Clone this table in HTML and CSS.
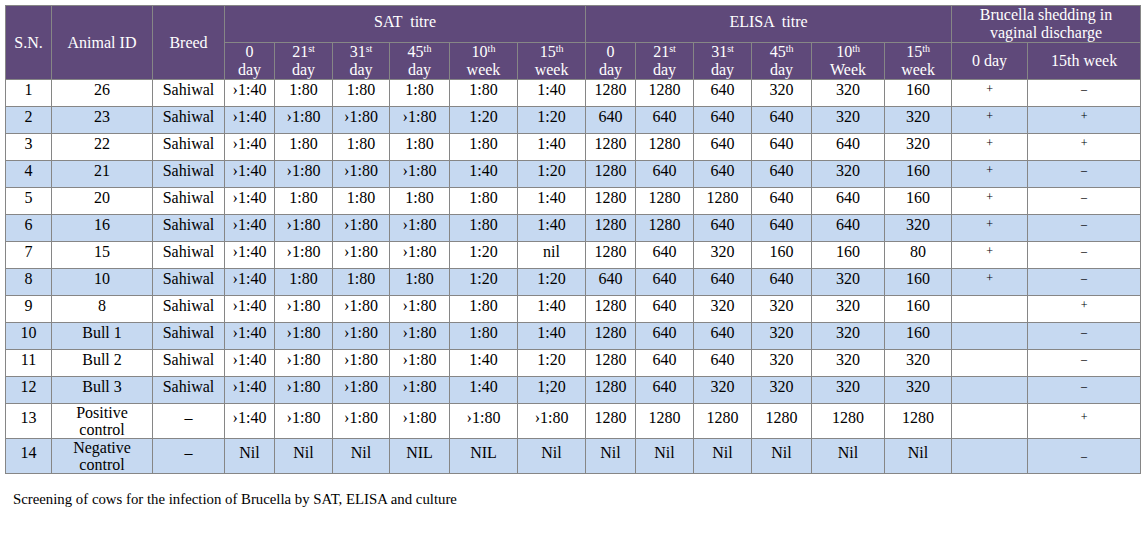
FILE: index.html
```html
<!DOCTYPE html>
<html>
<head>
<meta charset="utf-8">
<title>Screening of cows for Brucella</title>
<link rel="stylesheet" href="styles.css">
</head>
<body>
<div class="page">
<table class="grid">
  <colgroup>
    <col style="width:46px"><col style="width:101px"><col style="width:72px">
    <col style="width:50px"><col style="width:58px"><col style="width:57px"><col style="width:60px"><col style="width:68px"><col style="width:68px">
    <col style="width:50px"><col style="width:58px"><col style="width:58px"><col style="width:60px"><col style="width:73px"><col style="width:67px">
    <col style="width:76px"><col style="width:113px">
  </colgroup>
  <thead>
    <tr class="h1">
      <th rowspan="2">S.N.</th>
      <th rowspan="2">Animal ID</th>
      <th rowspan="2">Breed</th>
      <th colspan="6" class="group">SAT &nbsp;titre</th>
      <th colspan="6" class="group">ELISA &nbsp;titre</th>
      <th colspan="2" class="two">Brucella shedding in<br>vaginal discharge</th>
    </tr>
    <tr class="h2">
      <th class="two">0<br>day</th>
      <th class="two">21<sup>st</sup><br>day</th>
      <th class="two">31<sup>st</sup><br>day</th>
      <th class="two">45<sup>th</sup><br>day</th>
      <th class="two">10<sup>th</sup><br>week</th>
      <th class="two">15<sup>th</sup><br>week</th>
      <th class="two">0<br>day</th>
      <th class="two">21<sup>st</sup><br>day</th>
      <th class="two">31<sup>st</sup><br>day</th>
      <th class="two">45<sup>th</sup><br>day</th>
      <th class="two">10<sup>th</sup><br>Week</th>
      <th class="two">15<sup>th</sup><br>week</th>
      <th>0 day</th>
      <th>15th week</th>
    </tr>
  </thead>
  <tbody>
    <tr><td>1</td><td>26</td><td>Sahiwal</td><td>›1:40</td><td>1:80</td><td>1:80</td><td>1:80</td><td>1:80</td><td>1:40</td><td>1280</td><td>1280</td><td>640</td><td>320</td><td>320</td><td>160</td><td class="sign">+</td><td class="sign">–</td></tr>
    <tr class="alt"><td>2</td><td>23</td><td>Sahiwal</td><td>›1:40</td><td>›1:80</td><td>›1:80</td><td>›1:80</td><td>1:20</td><td>1:20</td><td>640</td><td>640</td><td>640</td><td>640</td><td>320</td><td>320</td><td class="sign">+</td><td class="sign">+</td></tr>
    <tr><td>3</td><td>22</td><td>Sahiwal</td><td>›1:40</td><td>1:80</td><td>1:80</td><td>1:80</td><td>1:80</td><td>1:40</td><td>1280</td><td>1280</td><td>640</td><td>640</td><td>640</td><td>320</td><td class="sign">+</td><td class="sign">+</td></tr>
    <tr class="alt"><td>4</td><td>21</td><td>Sahiwal</td><td>›1:40</td><td>›1:80</td><td>›1:80</td><td>›1:80</td><td>1:40</td><td>1:20</td><td>1280</td><td>640</td><td>640</td><td>640</td><td>320</td><td>160</td><td class="sign">+</td><td class="sign">–</td></tr>
    <tr><td>5</td><td>20</td><td>Sahiwal</td><td>›1:40</td><td>1:80</td><td>1:80</td><td>1:80</td><td>1:80</td><td>1:40</td><td>1280</td><td>1280</td><td>1280</td><td>640</td><td>640</td><td>160</td><td class="sign">+</td><td class="sign">–</td></tr>
    <tr class="alt"><td>6</td><td>16</td><td>Sahiwal</td><td>›1:40</td><td>›1:80</td><td>›1:80</td><td>›1:80</td><td>1:80</td><td>1:40</td><td>1280</td><td>1280</td><td>640</td><td>640</td><td>640</td><td>320</td><td class="sign">+</td><td class="sign">–</td></tr>
    <tr><td>7</td><td>15</td><td>Sahiwal</td><td>›1:40</td><td>›1:80</td><td>›1:80</td><td>›1:80</td><td>1:20</td><td>nil</td><td>1280</td><td>640</td><td>320</td><td>160</td><td>160</td><td>80</td><td class="sign">+</td><td class="sign">–</td></tr>
    <tr class="alt"><td>8</td><td>10</td><td>Sahiwal</td><td>›1:40</td><td>1:80</td><td>1:80</td><td>1:80</td><td>1:20</td><td>1:20</td><td>640</td><td>640</td><td>640</td><td>640</td><td>320</td><td>160</td><td class="sign">+</td><td class="sign">–</td></tr>
    <tr><td>9</td><td>8</td><td>Sahiwal</td><td>›1:40</td><td>›1:80</td><td>›1:80</td><td>›1:80</td><td>1:80</td><td>1:40</td><td>1280</td><td>640</td><td>320</td><td>320</td><td>320</td><td>160</td><td class="sign"></td><td class="sign">+</td></tr>
    <tr class="alt"><td>10</td><td>Bull 1</td><td>Sahiwal</td><td>›1:40</td><td>›1:80</td><td>›1:80</td><td>›1:80</td><td>1:80</td><td>1:40</td><td>1280</td><td>640</td><td>640</td><td>320</td><td>320</td><td>160</td><td class="sign"></td><td class="sign">–</td></tr>
    <tr><td>11</td><td>Bull 2</td><td>Sahiwal</td><td>›1:40</td><td>›1:80</td><td>›1:80</td><td>›1:80</td><td>1:40</td><td>1:20</td><td>1280</td><td>640</td><td>640</td><td>320</td><td>320</td><td>320</td><td class="sign"></td><td class="sign">–</td></tr>
    <tr class="alt"><td>12</td><td>Bull 3</td><td>Sahiwal</td><td>›1:40</td><td>›1:80</td><td>›1:80</td><td>›1:80</td><td>1:40</td><td>1;20</td><td>1280</td><td>640</td><td>320</td><td>320</td><td>320</td><td>320</td><td class="sign"></td><td class="sign">–</td></tr>
    <tr class="tall"><td>13</td><td class="two">Positive<br>control</td><td>–</td><td>›1:40</td><td>›1:80</td><td>›1:80</td><td>›1:80</td><td>›1:80</td><td>›1:80</td><td>1280</td><td>1280</td><td>1280</td><td>1280</td><td>1280</td><td>1280</td><td class="sign"></td><td class="sign">+</td></tr>
    <tr class="alt tall"><td>14</td><td class="two">Negative<br>control</td><td>–</td><td>Nil</td><td>Nil</td><td>Nil</td><td>NIL</td><td>NIL</td><td>Nil</td><td>Nil</td><td>Nil</td><td>Nil</td><td>Nil</td><td>Nil</td><td>Nil</td><td class="sign"></td><td class="sign low">–</td></tr>
  </tbody>
</table>
<p class="caption">Screening of cows for the infection of Brucella by SAT, ELISA and culture</p>
</div>
</body>
</html>
```

FILE: styles.css
```css
html, body {
  margin: 0;
  padding: 0;
  background: #ffffff;
}

.page {
  padding: 5px 0 0 5px;
  font-family: "Liberation Serif", "DejaVu Serif", serif;
  color: #000000;
}

.grid {
  border-collapse: collapse;
  table-layout: fixed;
  width: 1136px;
  font-size: 16px;
  line-height: 17px;
}

.grid th,
.grid td {
  border: 1px solid #868686;
  padding: 0;
  text-align: center;
  font-weight: normal;
}

.grid th {
  background: #5f497a;
  color: #ffffff;
  vertical-align: middle;
}

.grid .h1 th {
  height: 35px;
}

.grid .h1 th.group {
  height: 28px;
  vertical-align: top;
  padding-top: 7px;
}

.grid .h2 th {
  height: 36px;
  line-height: 18px;
}

.grid .h1 th.two {
  line-height: 18px;
}

.grid sup {
  font-size: 10px;
  line-height: 0;
  vertical-align: 5px;
}

.grid td {
  height: 27px;
  vertical-align: top;
  padding-top: 1px;
  box-sizing: border-box;
}

.grid tr.alt td {
  background: #c6d9f1;
}

.grid tr.tall td {
  vertical-align: middle;
  padding-top: 0;
  padding-bottom: 8px;
}

.grid tr.tall td.two {
  vertical-align: top;
  padding-bottom: 0;
  line-height: 17px;
}

.grid td.sign {
  font-size: 12px;
}

.grid tr.tall td.low {
  vertical-align: top;
  padding-top: 9px;
  padding-bottom: 0;
}

.caption {
  margin: 16px 0 0 8px;
  font-size: 14.8px;
  line-height: 18px;
}
```
